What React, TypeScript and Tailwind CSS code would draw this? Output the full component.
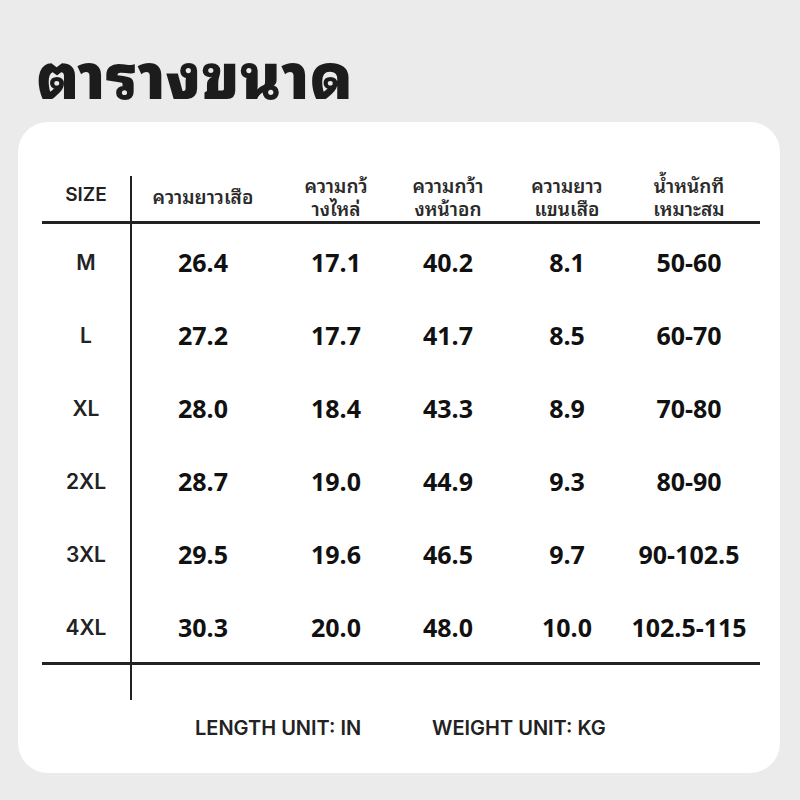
import React from "react";

const rows = [
  ["M", "26.4", "17.1", "40.2", "8.1", "50-60"],
  ["L", "27.2", "17.7", "41.7", "8.5", "60-70"],
  ["XL", "28.0", "18.4", "43.3", "8.9", "70-80"],
  ["2XL", "28.7", "19.0", "44.9", "9.3", "80-90"],
  ["3XL", "29.5", "19.6", "46.5", "9.7", "90-102.5"],
  ["4XL", "30.3", "20.0", "48.0", "10.0", "102.5-115"],
];

const headers: string[][] = [
  ["ความยาวเสือ"],
  ["ความกว้", "างไหล่"],
  ["ความกว้า", "งหน้าอก"],
  ["ความยาว", "แขนเสือ"],
  ["น้ำหนักที", "เหมาะสม"],
];

const thai = "font-['Noto_Sans_Thai_Looped','Noto_Sans_Thai','Noto_Sans','DejaVu_Sans',sans-serif]";
const geo = "font-['Inter','Lato',sans-serif]";
const num = "font-['Open_Sans','Noto_Sans',sans-serif]";

export default function App() {
  return (
    <div className="w-[800px] h-[800px] bg-[#ebebeb] flex flex-col">
      <div className={`h-[122px] pl-[36px] pt-[29px] text-[62px] leading-[84px] font-black text-[#1c1c1c] whitespace-nowrap ${thai}`}>
        ตารางขนาด
      </div>
      <div className="mx-[18px] w-[762px] h-[651px] bg-white rounded-[30px] pl-[24px] pt-[54px] flex flex-col">
        <div className="w-[718px] grid grid-cols-[90px_142px_124px_100px_138px_106px_18px]">
          <div className={`h-[45px] border-r-2 border-[#222] flex items-center justify-center pb-[6px] text-[19px] font-semibold text-[#222] ${geo}`}>
            SIZE
          </div>
          {headers.map((h, i) => (
            <div
              key={i}
              className={`h-[45px] flex flex-col items-center justify-center pb-[6px] text-[19px] leading-[23px] font-semibold text-[#2a2a2a] whitespace-nowrap ${thai}`}
            >
              {h.map((l, j) => (
                <span key={j}>{l}</span>
              ))}
            </div>
          ))}
          <div />
          <div className="col-span-7 h-[3px] bg-[#222]" />
          {rows.map((r, ri) => (
            <React.Fragment key={ri}>
              <div className={`h-[73px] border-r-2 border-[#222] flex items-center justify-center pt-[4px] text-[21px] font-semibold text-[#222] ${geo}`}>
                {r[0]}
              </div>
              {r.slice(1).map((v, vi) => (
                <div
                  key={vi}
                  className={`h-[73px] flex items-center justify-center pt-[4px] text-[25px] font-bold text-[#111] whitespace-nowrap ${num}`}
                >
                  {v}
                </div>
              ))}
              <div />
            </React.Fragment>
          ))}
          <div className="col-span-7 h-[3px] bg-[#222]" />
          <div className="h-[35px] border-r-2 border-[#222]" />
        </div>
        <div className={`flex pl-[153px] pt-[13px] text-[20px] font-semibold text-[#222] whitespace-nowrap ${geo}`}>
          <span className="w-[237px]">LENGTH UNIT: IN</span>
          <span>WEIGHT UNIT: KG</span>
        </div>
      </div>
    </div>
  );
}
